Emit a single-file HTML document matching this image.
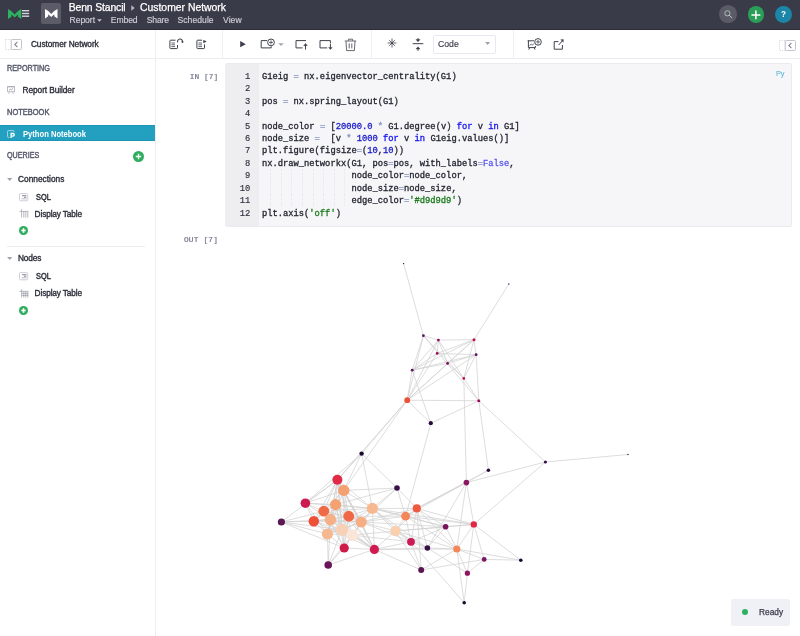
<!DOCTYPE html>
<html lang="en">
<head>
<meta charset="utf-8">
<title>Customer Network</title>
<style>
html,body{margin:0;padding:0;}
body{width:800px;height:636px;position:relative;overflow:hidden;background:#fff;will-change:transform;font-family:"Liberation Sans",sans-serif;}
.abs{position:absolute;}
.bm{display:inline-block;width:0;height:0;}
.t{position:absolute;white-space:pre;line-height:1;}
#topbar{left:0;top:0;width:800px;height:29px;background:#3a3b48;border-bottom:1px solid #2c2d38;}
#avatar{left:40.9px;top:3.3px;width:20.2px;height:20.5px;border-radius:2px;background:#5b5c68;}
.circ{border-radius:50%;}
#hline{left:0;top:58px;width:800px;height:1px;background:#ededf1;}
#vside{left:155px;top:30px;width:1px;height:606px;background:#eeeef2;}
.vd{top:30px;width:1px;height:28px;background:#efeff3;}
#sel{left:0;top:125.4px;width:155px;height:15.6px;background:#23a0c0;box-sizing:border-box;border-top:1px solid #1c94b4;border-bottom:1px solid #1c94b4;}
#sep{left:7px;top:246px;width:137.5px;height:1px;background:#ececf0;}
#cell{left:224.5px;top:63px;width:565.6px;height:161.5px;background:#f6f6f9;border:1px solid #e9ebf1;border-radius:2px;box-sizing:content-box;}
#gutter{left:225.3px;top:64px;width:33.5px;height:162.3px;background:#eeeef1;}
.ln,.cl{position:absolute;font:400 8.774px/1 "Liberation Mono",monospace;white-space:pre;color:#23242f;-webkit-text-stroke:0.3px;}
.ln{left:226.8px;width:23.4px;text-align:right;color:#30313d;-webkit-text-stroke:0.15px;}
.cl{left:262px;}
.ig{position:absolute;width:0;height:12.4px;border-left:1px dotted #e6e7ee;}
#select{left:432.9px;top:34.5px;width:61.6px;height:17.3px;border:1px solid #e6e8f2;border-radius:2px;background:#fff;}
#ready{left:731.2px;top:599px;width:59px;height:27px;border-radius:2.5px;background:#f0f1f6;}
svg{position:absolute;overflow:visible;}
svg.g{left:0;top:0;}
</style>
</head>
<body>
<div id="topbar" class="abs"></div>
<!-- logo -->
<svg style="left:7.7px;top:8.7px" width="13.3" height="10.1" viewBox="0 0 13.3 10.1" preserveAspectRatio="none">
  <path d="M0 0 L3.5 2.2 L6.65 5.4 L9.8 2.2 L13.3 0 L13.3 10.1 L9.9 7.7 L9.9 5.6 L6.65 8.6 L3.4 5.6 L3.4 7.7 L0 10.1 Z" fill="#2fb25f"/>
</svg>
<svg style="left:21.9px;top:10.2px" width="7.2" height="7" viewBox="0 0 7.2 7">
  <rect x="0" y="0" width="7.2" height="1.4" fill="#d4d5dc"/>
  <rect x="0" y="2.8" width="7.2" height="1.4" fill="#d4d5dc"/>
  <rect x="0" y="5.5" width="7.2" height="1.4" fill="#d4d5dc"/>
</svg>
<div id="avatar" class="abs"></div>
<svg style="left:44.8px;top:8.8px" width="12.5" height="9.5" viewBox="0 0 12.5 9.5" preserveAspectRatio="none">
  <path d="M0 0 L3.3 2.1 L6.25 5.1 L9.2 2.1 L12.5 0 L12.5 9.5 L9.3 7.2 L9.3 5.2 L6.25 8.1 L3.2 5.2 L3.2 7.2 L0 9.5 Z" fill="#ffffff"/>
</svg>
<!-- breadcrumb arrow + caret -->
<svg style="left:131px;top:5px" width="4" height="6" viewBox="0 0 4 6"><path d="M0.3 0.3 L3.7 3 L0.3 5.7 Z" fill="#b9bac4"/></svg>
<svg style="left:97.2px;top:19.2px" width="5" height="3" viewBox="0 0 5 3"><path d="M0.2 0.2 L4.8 0.2 L2.5 2.8 Z" fill="#c9cad2"/></svg>
<!-- top right circles -->
<div class="abs circ" style="left:719px;top:5.2px;width:17.6px;height:17.6px;background:#5a5b66"></div>
<svg style="left:722.5px;top:8.5px" width="11" height="11" viewBox="0 0 11 11"><circle cx="4.4" cy="4.3" r="2.6" fill="none" stroke="#b9c8c4" stroke-width="0.9"/><path d="M6.3 6.3 L8.8 8.8" stroke="#b9c8c4" stroke-width="1" stroke-linecap="round"/></svg>
<div class="abs circ" style="left:747.5px;top:6px;width:16.8px;height:16.8px;background:#2a9d58"></div>
<svg style="left:751px;top:9.5px" width="10" height="10" viewBox="0 0 10 10"><path d="M4.9 1 V8.8 M1 4.9 H8.8" stroke="#fff" stroke-width="1.5" stroke-linecap="round"/></svg>
<div class="abs circ" style="left:775px;top:6px;width:16.8px;height:16.8px;background:#1b86a8"></div>

<div id="hline" class="abs"></div>
<div id="vside" class="abs"></div>
<div class="abs vd" style="left:222px"></div>
<div class="abs vd" style="left:371px"></div>
<div class="abs vd" style="left:512.5px"></div>

<!-- sidebar collapse icon (left) -->
<svg style="left:4.5px;top:38.5px" width="17" height="11" viewBox="0 0 17 11">
  <rect x="0.5" y="0.5" width="5.6" height="10" fill="none" stroke="#c9cad2" stroke-width="0.7" stroke-dasharray="1.2 1"/>
  <rect x="6.3" y="0.5" width="10.2" height="10" rx="1" fill="#fff" stroke="#b4b5c2" stroke-width="0.8"/>
  <path d="M12.4 2.9 L9.8 5.5 L12.4 8.1" fill="none" stroke="#858694" stroke-width="1.1"/>
</svg>
<!-- right collapse icon -->
<svg style="left:779px;top:40px" width="17" height="11" viewBox="0 0 17 11">
  <rect x="0.5" y="0.5" width="5.6" height="10" fill="none" stroke="#c9cad2" stroke-width="0.7" stroke-dasharray="1.2 1"/>
  <rect x="6.3" y="0.5" width="10.2" height="10" rx="1" fill="#fff" stroke="#b4b5c2" stroke-width="0.8"/>
  <path d="M12.4 2.9 L9.8 5.5 L12.4 8.1" fill="none" stroke="#858694" stroke-width="1.1"/>
</svg>

<!-- toolbar icons -->

<svg style="left:168.5px;top:38.3px" width="16" height="12" viewBox="0 0 16 12" fill="none" stroke="#40414d" stroke-width="1">
  <path d="M6.5 2.2 H1.6 Q0.9 2.2 0.9 2.9 V9.9 Q0.9 10.6 1.6 10.6 H7.8 Q8.5 10.6 8.5 9.9 V7"/>
  <path d="M2.4 5 H6 M2.4 6.8 H6 M2.4 8.6 H6" stroke-width="0.8"/>
  <path d="M8.7 4.4 A2.5 2.5 0 1 1 13.5 3.9" stroke-width="1.1"/>
  <path d="M11.9 3.6 L13.5 5.2 L14.9 3.4 Z" fill="#40414d" stroke="none"/>
</svg>
<svg style="left:195.8px;top:38.3px" width="12" height="12" viewBox="0 0 12 12" fill="none" stroke="#40414d" stroke-width="1">
  <path d="M6 2.2 H1.6 Q0.9 2.2 0.9 2.9 V9.9 Q0.9 10.6 1.6 10.6 H7.8 Q8.5 10.6 8.5 9.9 V6.4"/>
  <path d="M2.4 5 H6 M2.4 6.8 H6 M2.4 8.6 H6" stroke-width="0.8"/>
  <path d="M7.3 1.7 L10.7 3.5 L7.3 5.3 Z" fill="#40414d" stroke="none"/>
</svg>
<svg style="left:240px;top:41px" width="6" height="6.4" viewBox="0 0 6 6.4"><path d="M0.2 0.1 L5.8 3.2 L0.2 6.3 Z" fill="#3d3e4a"/></svg>
<svg style="left:260px;top:38px" width="25" height="12" viewBox="0 0 25 12" fill="none" stroke="#40414d" stroke-width="1">
  <path d="M7 2.6 H1.2 V9.9 H11.2 V8.4"/>
  <circle cx="11" cy="4.4" r="3.4" fill="#fff"/>
  <path d="M11 2.4 V6.4 M9 4.4 H13" stroke-width="0.8"/>
  <path d="M18.2 5.2 L23.8 5.2 L21 7.9 Z" fill="#a5a6b0" stroke="none"/>
</svg>
<svg style="left:294.5px;top:39px" width="14" height="12" viewBox="0 0 14 12" fill="none" stroke="#40414d" stroke-width="1">
  <path d="M11 1.6 H1 V8.9 H7.6"/>
  <path d="M10.5 10.6 V6"/><path d="M8.6 6.7 L10.5 4.4 L12.4 6.7 Z" fill="#40414d" stroke-width="0.4"/>
</svg>
<svg style="left:319px;top:39px" width="14" height="12" viewBox="0 0 14 12" fill="none" stroke="#40414d" stroke-width="1">
  <path d="M11.4 4 V1.6 H1 V8.9 H8.2"/>
  <path d="M11.4 4.6 V9"/><path d="M9.6 8.4 L11.4 10.6 L13.2 8.4 Z" fill="#40414d" stroke-width="0.4"/>
</svg>
<svg style="left:343.8px;top:37.5px" width="13" height="14" viewBox="0 0 13 14" fill="none" stroke="#4c4d5a" stroke-width="0.85">
  <path d="M0.8 3 H12.2 M4.4 2.8 V1.2 H8.6 V2.8"/>
  <path d="M2 3.2 L2.6 12.6 H10.4 L11 3.2"/>
  <path d="M5.2 5.4 V10.4 M7.8 5.4 V10.4"/>
</svg>
<svg style="left:387.3px;top:38.4px" width="10" height="10" viewBox="0 0 10 10" fill="none" stroke="#40414d" stroke-width="0.8">
  <path d="M5 0.4 V9.6 M0.6 5 H9.4 M2.2 2.2 L7.8 7.8 M7.8 2.2 L2.2 7.8" />
</svg>
<svg style="left:411.5px;top:36.5px" width="12" height="15" viewBox="0 0 12 15" fill="none" stroke="#40414d" stroke-width="1">
  <path d="M0.7 6.7 H11.3"/>
  <path d="M6 1 V3.4 M6 13.9 V11.4"/>
  <path d="M4 2.6 L6 4.7 L8 2.6 Z M4 11.9 L6 9.8 L8 11.9 Z" fill="#40414d" stroke-width="0.5"/>
</svg>
<div id="select" class="abs"></div>
<svg style="left:484.9px;top:42.3px" width="5.2" height="3" viewBox="0 0 5.2 3"><path d="M0.1 0.1 L5.1 0.1 L2.6 2.9 Z" fill="#a0a1ad"/></svg>
<svg style="left:526.5px;top:38px" width="16" height="13" viewBox="0 0 16 13" fill="none" stroke="#40414d" stroke-width="1">
  <path d="M7 2.8 H1.4 V9.6 H8.4 V8"/>
  <path d="M0.6 2.8 H2 M2.6 9.6 L1.8 11.6 M7.2 9.6 L8 11.6" />
  <path d="M2.6 7.6 L4.2 6 L5.4 7.2 L7 5.4" stroke-width="0.8"/>
  <circle cx="11" cy="3.9" r="3.3" fill="#fff"/>
  <path d="M11 2 V5.8 M9.1 3.9 H12.9" stroke-width="0.8"/>
</svg>
<svg style="left:553px;top:38px" width="12" height="13" viewBox="0 0 12 13" fill="none" stroke="#40414d" stroke-width="1">
  <path d="M5.4 3.6 H1.2 V11.2 H9.4 V7"/>
  <path d="M5.6 7 L9.6 2.6"/>
  <path d="M7.4 1.6 L10.6 1.2 L10.4 4.4 Z" fill="#40414d" stroke="none"/>
</svg>

<!-- sidebar -->
<div id="sel" class="abs"></div>
<svg style="left:7.2px;top:85.8px" width="8" height="9" viewBox="0 0 8 9" fill="none" stroke="#8f909e" stroke-width="0.6">
  <rect x="0.7" y="0.8" width="6.6" height="5"/>
  <path d="M0 0.8 H8 M2.2 6 L1.8 7.8 M5.8 6 L6.2 7.8"/>
  <path d="M2 4.4 L3.3 3.2 L4.2 4 L6 2.4" stroke="#6d6e7c"/>
</svg>
<svg style="left:7.2px;top:129.8px" width="9" height="9" viewBox="0 0 9 9" fill="none" stroke="#c4e6f0" stroke-width="0.8">
  <path d="M2.4 7.4 H1.4 Q0.6 7.4 0.6 6.6 V1.4 Q0.6 0.6 1.4 0.6 H6.2 Q7 0.6 7 1.4 V2.2"/>
  <path d="M4.1 8 V3.5 H5.9 Q7.3 3.5 7.3 4.8 Q7.3 6.1 5.9 6.1 H4.1" stroke="#fff" stroke-width="1.3"/>
</svg>
<div class="abs circ" style="left:132.8px;top:151px;width:11.2px;height:11.2px;background:#2eae5e"></div>
<svg style="left:134.9px;top:153.1px" width="7" height="7" viewBox="0 0 7 7"><path d="M3.5 0.8 V6.2 M0.8 3.5 H6.2" stroke="#fff" stroke-width="1.3"/></svg>

<svg style="left:7.2px;top:177.6px" width="5.4" height="3" viewBox="0 0 5.4 3"><path d="M0.1 0.1 L5.3 0.1 L2.7 2.9 Z" fill="#a2a3af"/></svg>
<svg style="left:7.2px;top:257px" width="5.4" height="3" viewBox="0 0 5.4 3"><path d="M0.1 0.1 L5.3 0.1 L2.7 2.9 Z" fill="#a2a3af"/></svg>

<svg style="left:18.8px;top:192.8px" width="10" height="9" viewBox="0 0 10 9" fill="none" stroke="#8a8b98" stroke-width="0.7">
  <rect x="0.5" y="0.6" width="8.2" height="7.2" rx="1" stroke="#b9bac8"/>
  <path d="M3 2.7 H7.4 M5 4.2 H7.4" stroke="#55566a"/><path d="M2.6 5.8 H7.6" stroke="#9a9ba8"/>
</svg>
<svg style="left:18.8px;top:272.2px" width="10" height="9" viewBox="0 0 10 9" fill="none" stroke="#8a8b98" stroke-width="0.7">
  <rect x="0.5" y="0.6" width="8.2" height="7.2" rx="1" stroke="#b9bac8"/>
  <path d="M3 2.7 H7.4 M5 4.2 H7.4" stroke="#55566a"/><path d="M2.6 5.8 H7.6" stroke="#9a9ba8"/>
</svg>
<svg style="left:18.8px;top:209.2px" width="10" height="9" viewBox="0 0 10 9" fill="none" stroke="#8a8b98" stroke-width="0.6">
  <path d="M0.4 2.4 H9.4 M2.6 0.2 V8.6 M4.8 2.4 V8.6 M6.8 2.4 V8.6 M8.8 2.4 V8.6"/>
</svg>
<svg style="left:18.8px;top:288.8px" width="10" height="9" viewBox="0 0 10 9" fill="none" stroke="#8a8b98" stroke-width="0.6">
  <path d="M0.4 2.4 H9.4 M2.6 0.2 V8.6 M2.6 4.4 H9.4 M2.6 6.4 H9.4 M4.8 2.4 V8.6 M6.8 2.4 V8.6 M8.8 2.4 V8.6"/>
</svg>
<div class="abs circ" style="left:19px;top:226.4px;width:8.8px;height:8.8px;background:#2eae5e"></div>
<svg style="left:20.9px;top:228.3px" width="5" height="5" viewBox="0 0 5 5"><path d="M2.5 0.3 V4.7 M0.3 2.5 H4.7" stroke="#fff" stroke-width="1.6"/></svg>
<div class="abs circ" style="left:19px;top:305.8px;width:8.8px;height:8.8px;background:#2eae5e"></div>
<svg style="left:20.9px;top:307.7px" width="5" height="5" viewBox="0 0 5 5"><path d="M2.5 0.3 V4.7 M0.3 2.5 H4.7" stroke="#fff" stroke-width="1.6"/></svg>
<div id="sep" class="abs"></div>

<!-- code cell -->
<div id="cell" class="abs"></div>
<div id="gutter" class="abs"></div>
<div class="ig" style="left:270.43px;top:168.84px"></div><div class="ig" style="left:280.96px;top:168.84px"></div><div class="ig" style="left:291.49px;top:168.84px"></div><div class="ig" style="left:302.02px;top:168.84px"></div><div class="ig" style="left:312.55px;top:168.84px"></div><div class="ig" style="left:323.08px;top:168.84px"></div><div class="ig" style="left:333.61px;top:168.84px"></div><div class="ig" style="left:344.14px;top:168.84px"></div><div class="ig" style="left:270.43px;top:181.27px"></div><div class="ig" style="left:280.96px;top:181.27px"></div><div class="ig" style="left:291.49px;top:181.27px"></div><div class="ig" style="left:302.02px;top:181.27px"></div><div class="ig" style="left:312.55px;top:181.27px"></div><div class="ig" style="left:323.08px;top:181.27px"></div><div class="ig" style="left:333.61px;top:181.27px"></div><div class="ig" style="left:344.14px;top:181.27px"></div><div class="ig" style="left:270.43px;top:193.70px"></div><div class="ig" style="left:280.96px;top:193.70px"></div><div class="ig" style="left:291.49px;top:193.70px"></div><div class="ig" style="left:302.02px;top:193.70px"></div><div class="ig" style="left:312.55px;top:193.70px"></div><div class="ig" style="left:323.08px;top:193.70px"></div><div class="ig" style="left:333.61px;top:193.70px"></div><div class="ig" style="left:344.14px;top:193.70px"></div>
<div class="ln" style="top:73.00px">1</div><div class="cl" style="top:73.00px">G1eig <span style="color:#8794c0">=</span> nx.eigenvector_centrality(G1)</div><div class="ln" style="top:85.00px">2</div><div class="ln" style="top:98.00px">3</div><div class="cl" style="top:98.00px">pos <span style="color:#8794c0">=</span> nx.spring_layout(G1)</div><div class="ln" style="top:110.00px">4</div><div class="ln" style="top:123.00px">5</div><div class="cl" style="top:123.00px">node_color <span style="color:#8794c0">=</span> [<span style="color:#1a1ac8">20000.0</span> <span style="color:#8794c0">*</span> G1.degree(v) <span style="color:#1414f0">for</span> v <span style="color:#1414f0">in</span> G1]</div><div class="ln" style="top:135.00px">6</div><div class="cl" style="top:135.00px">node_size <span style="color:#8794c0">=</span>  [v <span style="color:#8794c0">*</span> <span style="color:#1a1ac8">1000</span> <span style="color:#1414f0">for</span> v <span style="color:#1414f0">in</span> G1eig.values()]</div><div class="ln" style="top:147.00px">7</div><div class="cl" style="top:147.00px">plt.figure(figsize<span style="color:#8794c0">=</span>(<span style="color:#1a1ac8">10</span>,<span style="color:#1a1ac8">10</span>))</div><div class="ln" style="top:160.00px">8</div><div class="cl" style="top:160.00px">nx.draw_networkx(G1, pos<span style="color:#8794c0">=</span>pos, with_labels<span style="color:#8794c0">=</span><span style="color:#5a5af0">False</span>,</div><div class="ln" style="top:172.00px">9</div><div class="cl" style="top:172.00px">                 node_color<span style="color:#8794c0">=</span>node_color,</div><div class="ln" style="top:185.00px">10</div><div class="cl" style="top:185.00px">                 node_size<span style="color:#8794c0">=</span>node_size,</div><div class="ln" style="top:197.00px">11</div><div class="cl" style="top:197.00px">                 edge_color<span style="color:#8794c0">=</span><span style="color:#1a7a1a">'#d9d9d9'</span>)</div><div class="ln" style="top:210.00px">12</div><div class="cl" style="top:210.00px">plt.axis(<span style="color:#1a7a1a">'off'</span>)</div>

<!-- ready -->
<div id="ready" class="abs"></div>
<div class="abs circ" style="left:741.8px;top:609.1px;width:6px;height:6px;background:#2eb060"></div>

<svg class="g" width="800" height="636" viewBox="0 0 800 636">
<g stroke="#d2d2d2" stroke-width="0.75" fill="none">
<line x1="423.4" y1="335.7" x2="438.4" y2="340.1"/>
<line x1="423.4" y1="335.7" x2="412.2" y2="370.2"/>
<line x1="423.4" y1="335.7" x2="463.8" y2="378.4"/>
<line x1="423.4" y1="335.7" x2="407.2" y2="400.2"/>
<line x1="423.4" y1="335.7" x2="478.8" y2="400.8"/>
<line x1="423.4" y1="335.7" x2="403.6" y2="263.6"/>
<line x1="438.4" y1="340.1" x2="474.0" y2="339.7"/>
<line x1="438.4" y1="340.1" x2="437.2" y2="353.4"/>
<line x1="438.4" y1="340.1" x2="447.6" y2="363.4"/>
<line x1="438.4" y1="340.1" x2="412.2" y2="370.2"/>
<line x1="438.4" y1="340.1" x2="463.8" y2="378.4"/>
<line x1="438.4" y1="340.1" x2="407.2" y2="400.2"/>
<line x1="474.0" y1="339.7" x2="437.2" y2="353.4"/>
<line x1="474.0" y1="339.7" x2="476.1" y2="354.7"/>
<line x1="474.0" y1="339.7" x2="447.6" y2="363.4"/>
<line x1="474.0" y1="339.7" x2="412.2" y2="370.2"/>
<line x1="474.0" y1="339.7" x2="463.8" y2="378.4"/>
<line x1="474.0" y1="339.7" x2="407.2" y2="400.2"/>
<line x1="474.0" y1="339.7" x2="508.8" y2="284.0"/>
<line x1="437.2" y1="353.4" x2="476.1" y2="354.7"/>
<line x1="437.2" y1="353.4" x2="412.2" y2="370.2"/>
<line x1="437.2" y1="353.4" x2="407.2" y2="400.2"/>
<line x1="476.1" y1="354.7" x2="447.6" y2="363.4"/>
<line x1="476.1" y1="354.7" x2="412.2" y2="370.2"/>
<line x1="476.1" y1="354.7" x2="463.8" y2="378.4"/>
<line x1="476.1" y1="354.7" x2="407.2" y2="400.2"/>
<line x1="476.1" y1="354.7" x2="478.8" y2="400.8"/>
<line x1="447.6" y1="363.4" x2="412.2" y2="370.2"/>
<line x1="447.6" y1="363.4" x2="463.8" y2="378.4"/>
<line x1="447.6" y1="363.4" x2="407.2" y2="400.2"/>
<line x1="412.2" y1="370.2" x2="407.2" y2="400.2"/>
<line x1="412.2" y1="370.2" x2="430.8" y2="423.2"/>
<line x1="463.8" y1="378.4" x2="478.8" y2="400.8"/>
<line x1="463.8" y1="378.4" x2="466.4" y2="482.6"/>
<line x1="407.2" y1="400.2" x2="478.8" y2="400.8"/>
<line x1="407.2" y1="400.2" x2="430.8" y2="423.2"/>
<line x1="407.2" y1="400.2" x2="361.6" y2="453.6"/>
<line x1="407.2" y1="400.2" x2="337.4" y2="479.8"/>
<line x1="407.2" y1="400.2" x2="343.8" y2="490.4"/>
<line x1="478.8" y1="400.8" x2="430.8" y2="423.2"/>
<line x1="478.8" y1="400.8" x2="545.4" y2="462.0"/>
<line x1="478.8" y1="400.8" x2="488.4" y2="470.2"/>
<line x1="430.8" y1="423.2" x2="405.6" y2="516.2"/>
<line x1="361.6" y1="453.6" x2="337.4" y2="479.8"/>
<line x1="361.6" y1="453.6" x2="343.8" y2="490.4"/>
<line x1="361.6" y1="453.6" x2="397.0" y2="488.0"/>
<line x1="361.6" y1="453.6" x2="305.4" y2="503.2"/>
<line x1="361.6" y1="453.6" x2="372.4" y2="508.4"/>
<line x1="348.8" y1="516.2" x2="405.6" y2="516.2"/>
<line x1="348.8" y1="516.2" x2="330.4" y2="519.6"/>
<line x1="348.8" y1="516.2" x2="313.8" y2="521.2"/>
<line x1="348.8" y1="516.2" x2="361.2" y2="522.0"/>
<line x1="348.8" y1="516.2" x2="327.4" y2="534.0"/>
<line x1="348.8" y1="516.2" x2="337.4" y2="479.8"/>
<line x1="348.8" y1="516.2" x2="344.2" y2="548.0"/>
<line x1="348.8" y1="516.2" x2="374.4" y2="549.4"/>
<line x1="348.8" y1="516.2" x2="343.8" y2="490.4"/>
<line x1="348.8" y1="516.2" x2="323.8" y2="511.2"/>
<line x1="348.8" y1="516.2" x2="372.4" y2="508.4"/>
<line x1="405.6" y1="516.2" x2="361.2" y2="522.0"/>
<line x1="405.6" y1="516.2" x2="395.4" y2="531.0"/>
<line x1="405.6" y1="516.2" x2="411.0" y2="541.8"/>
<line x1="405.6" y1="516.2" x2="397.0" y2="488.0"/>
<line x1="405.6" y1="516.2" x2="372.4" y2="508.4"/>
<line x1="405.6" y1="516.2" x2="416.8" y2="508.4"/>
<line x1="405.6" y1="516.2" x2="466.4" y2="482.6"/>
<line x1="405.6" y1="516.2" x2="473.8" y2="524.4"/>
<line x1="405.6" y1="516.2" x2="445.6" y2="526.8"/>
<line x1="405.6" y1="516.2" x2="456.8" y2="549.0"/>
<line x1="330.4" y1="519.6" x2="313.8" y2="521.2"/>
<line x1="330.4" y1="519.6" x2="281.4" y2="522.0"/>
<line x1="330.4" y1="519.6" x2="361.2" y2="522.0"/>
<line x1="330.4" y1="519.6" x2="342.0" y2="529.8"/>
<line x1="330.4" y1="519.6" x2="337.4" y2="479.8"/>
<line x1="330.4" y1="519.6" x2="344.2" y2="548.0"/>
<line x1="330.4" y1="519.6" x2="374.4" y2="549.4"/>
<line x1="330.4" y1="519.6" x2="328.2" y2="565.0"/>
<line x1="330.4" y1="519.6" x2="305.4" y2="503.2"/>
<line x1="330.4" y1="519.6" x2="335.6" y2="504.6"/>
<line x1="330.4" y1="519.6" x2="323.8" y2="511.2"/>
<line x1="313.8" y1="521.2" x2="281.4" y2="522.0"/>
<line x1="313.8" y1="521.2" x2="361.2" y2="522.0"/>
<line x1="313.8" y1="521.2" x2="342.0" y2="529.8"/>
<line x1="313.8" y1="521.2" x2="327.4" y2="534.0"/>
<line x1="313.8" y1="521.2" x2="337.4" y2="479.8"/>
<line x1="313.8" y1="521.2" x2="374.4" y2="549.4"/>
<line x1="313.8" y1="521.2" x2="343.8" y2="490.4"/>
<line x1="313.8" y1="521.2" x2="305.4" y2="503.2"/>
<line x1="313.8" y1="521.2" x2="335.6" y2="504.6"/>
<line x1="313.8" y1="521.2" x2="323.8" y2="511.2"/>
<line x1="281.4" y1="522.0" x2="342.0" y2="529.8"/>
<line x1="281.4" y1="522.0" x2="327.4" y2="534.0"/>
<line x1="281.4" y1="522.0" x2="337.4" y2="479.8"/>
<line x1="281.4" y1="522.0" x2="344.2" y2="548.0"/>
<line x1="281.4" y1="522.0" x2="323.8" y2="511.2"/>
<line x1="361.2" y1="522.0" x2="342.0" y2="529.8"/>
<line x1="361.2" y1="522.0" x2="395.4" y2="531.0"/>
<line x1="361.2" y1="522.0" x2="327.4" y2="534.0"/>
<line x1="361.2" y1="522.0" x2="352.2" y2="535.2"/>
<line x1="361.2" y1="522.0" x2="337.4" y2="479.8"/>
<line x1="361.2" y1="522.0" x2="411.0" y2="541.8"/>
<line x1="361.2" y1="522.0" x2="344.2" y2="548.0"/>
<line x1="361.2" y1="522.0" x2="374.4" y2="549.4"/>
<line x1="361.2" y1="522.0" x2="343.8" y2="490.4"/>
<line x1="361.2" y1="522.0" x2="397.0" y2="488.0"/>
<line x1="361.2" y1="522.0" x2="335.6" y2="504.6"/>
<line x1="361.2" y1="522.0" x2="323.8" y2="511.2"/>
<line x1="361.2" y1="522.0" x2="372.4" y2="508.4"/>
<line x1="361.2" y1="522.0" x2="416.8" y2="508.4"/>
<line x1="361.2" y1="522.0" x2="445.6" y2="526.8"/>
<line x1="342.0" y1="529.8" x2="327.4" y2="534.0"/>
<line x1="342.0" y1="529.8" x2="352.2" y2="535.2"/>
<line x1="342.0" y1="529.8" x2="337.4" y2="479.8"/>
<line x1="342.0" y1="529.8" x2="374.4" y2="549.4"/>
<line x1="342.0" y1="529.8" x2="328.2" y2="565.0"/>
<line x1="342.0" y1="529.8" x2="335.6" y2="504.6"/>
<line x1="342.0" y1="529.8" x2="323.8" y2="511.2"/>
<line x1="395.4" y1="531.0" x2="352.2" y2="535.2"/>
<line x1="395.4" y1="531.0" x2="411.0" y2="541.8"/>
<line x1="395.4" y1="531.0" x2="374.4" y2="549.4"/>
<line x1="395.4" y1="531.0" x2="372.4" y2="508.4"/>
<line x1="395.4" y1="531.0" x2="416.8" y2="508.4"/>
<line x1="395.4" y1="531.0" x2="421.2" y2="570.0"/>
<line x1="395.4" y1="531.0" x2="473.8" y2="524.4"/>
<line x1="395.4" y1="531.0" x2="445.6" y2="526.8"/>
<line x1="395.4" y1="531.0" x2="427.4" y2="548.0"/>
<line x1="395.4" y1="531.0" x2="456.8" y2="549.0"/>
<line x1="327.4" y1="534.0" x2="352.2" y2="535.2"/>
<line x1="327.4" y1="534.0" x2="337.4" y2="479.8"/>
<line x1="327.4" y1="534.0" x2="344.2" y2="548.0"/>
<line x1="327.4" y1="534.0" x2="328.2" y2="565.0"/>
<line x1="327.4" y1="534.0" x2="343.8" y2="490.4"/>
<line x1="327.4" y1="534.0" x2="305.4" y2="503.2"/>
<line x1="327.4" y1="534.0" x2="335.6" y2="504.6"/>
<line x1="327.4" y1="534.0" x2="372.4" y2="508.4"/>
<line x1="352.2" y1="535.2" x2="337.4" y2="479.8"/>
<line x1="352.2" y1="535.2" x2="411.0" y2="541.8"/>
<line x1="352.2" y1="535.2" x2="344.2" y2="548.0"/>
<line x1="352.2" y1="535.2" x2="374.4" y2="549.4"/>
<line x1="352.2" y1="535.2" x2="328.2" y2="565.0"/>
<line x1="352.2" y1="535.2" x2="335.6" y2="504.6"/>
<line x1="352.2" y1="535.2" x2="323.8" y2="511.2"/>
<line x1="352.2" y1="535.2" x2="372.4" y2="508.4"/>
<line x1="337.4" y1="479.8" x2="344.2" y2="548.0"/>
<line x1="337.4" y1="479.8" x2="374.4" y2="549.4"/>
<line x1="337.4" y1="479.8" x2="343.8" y2="490.4"/>
<line x1="337.4" y1="479.8" x2="305.4" y2="503.2"/>
<line x1="337.4" y1="479.8" x2="335.6" y2="504.6"/>
<line x1="337.4" y1="479.8" x2="323.8" y2="511.2"/>
<line x1="337.4" y1="479.8" x2="372.4" y2="508.4"/>
<line x1="411.0" y1="541.8" x2="374.4" y2="549.4"/>
<line x1="411.0" y1="541.8" x2="372.4" y2="508.4"/>
<line x1="411.0" y1="541.8" x2="416.8" y2="508.4"/>
<line x1="411.0" y1="541.8" x2="421.2" y2="570.0"/>
<line x1="411.0" y1="541.8" x2="464.2" y2="602.8"/>
<line x1="411.0" y1="541.8" x2="445.6" y2="526.8"/>
<line x1="411.0" y1="541.8" x2="427.4" y2="548.0"/>
<line x1="344.2" y1="548.0" x2="374.4" y2="549.4"/>
<line x1="344.2" y1="548.0" x2="328.2" y2="565.0"/>
<line x1="344.2" y1="548.0" x2="343.8" y2="490.4"/>
<line x1="344.2" y1="548.0" x2="335.6" y2="504.6"/>
<line x1="344.2" y1="548.0" x2="323.8" y2="511.2"/>
<line x1="374.4" y1="549.4" x2="328.2" y2="565.0"/>
<line x1="374.4" y1="549.4" x2="343.8" y2="490.4"/>
<line x1="374.4" y1="549.4" x2="335.6" y2="504.6"/>
<line x1="374.4" y1="549.4" x2="323.8" y2="511.2"/>
<line x1="374.4" y1="549.4" x2="372.4" y2="508.4"/>
<line x1="374.4" y1="549.4" x2="421.2" y2="570.0"/>
<line x1="374.4" y1="549.4" x2="427.4" y2="548.0"/>
<line x1="374.4" y1="549.4" x2="456.8" y2="549.0"/>
<line x1="343.8" y1="490.4" x2="397.0" y2="488.0"/>
<line x1="343.8" y1="490.4" x2="305.4" y2="503.2"/>
<line x1="343.8" y1="490.4" x2="323.8" y2="511.2"/>
<line x1="343.8" y1="490.4" x2="372.4" y2="508.4"/>
<line x1="397.0" y1="488.0" x2="335.6" y2="504.6"/>
<line x1="397.0" y1="488.0" x2="372.4" y2="508.4"/>
<line x1="397.0" y1="488.0" x2="416.8" y2="508.4"/>
<line x1="305.4" y1="503.2" x2="335.6" y2="504.6"/>
<line x1="305.4" y1="503.2" x2="323.8" y2="511.2"/>
<line x1="305.4" y1="503.2" x2="372.4" y2="508.4"/>
<line x1="335.6" y1="504.6" x2="323.8" y2="511.2"/>
<line x1="335.6" y1="504.6" x2="372.4" y2="508.4"/>
<line x1="323.8" y1="511.2" x2="372.4" y2="508.4"/>
<line x1="372.4" y1="508.4" x2="416.8" y2="508.4"/>
<line x1="372.4" y1="508.4" x2="473.8" y2="524.4"/>
<line x1="372.4" y1="508.4" x2="445.6" y2="526.8"/>
<line x1="372.4" y1="508.4" x2="427.4" y2="548.0"/>
<line x1="416.8" y1="508.4" x2="421.2" y2="570.0"/>
<line x1="416.8" y1="508.4" x2="488.4" y2="470.2"/>
<line x1="416.8" y1="508.4" x2="466.4" y2="482.6"/>
<line x1="416.8" y1="508.4" x2="473.8" y2="524.4"/>
<line x1="416.8" y1="508.4" x2="445.6" y2="526.8"/>
<line x1="416.8" y1="508.4" x2="427.4" y2="548.0"/>
<line x1="416.8" y1="508.4" x2="456.8" y2="549.0"/>
<line x1="545.4" y1="462.0" x2="628.0" y2="454.5"/>
<line x1="545.4" y1="462.0" x2="466.4" y2="482.6"/>
<line x1="545.4" y1="462.0" x2="473.8" y2="524.4"/>
<line x1="421.2" y1="570.0" x2="456.8" y2="549.0"/>
<line x1="421.2" y1="570.0" x2="484.2" y2="559.4"/>
<line x1="467.4" y1="573.2" x2="464.2" y2="602.8"/>
<line x1="467.4" y1="573.2" x2="473.8" y2="524.4"/>
<line x1="467.4" y1="573.2" x2="427.4" y2="548.0"/>
<line x1="467.4" y1="573.2" x2="456.8" y2="549.0"/>
<line x1="467.4" y1="573.2" x2="484.2" y2="559.4"/>
<line x1="464.2" y1="602.8" x2="456.8" y2="549.0"/>
<line x1="488.4" y1="470.2" x2="466.4" y2="482.6"/>
<line x1="466.4" y1="482.6" x2="473.8" y2="524.4"/>
<line x1="466.4" y1="482.6" x2="427.4" y2="548.0"/>
<line x1="466.4" y1="482.6" x2="456.8" y2="549.0"/>
<line x1="473.8" y1="524.4" x2="445.6" y2="526.8"/>
<line x1="473.8" y1="524.4" x2="456.8" y2="549.0"/>
<line x1="473.8" y1="524.4" x2="484.2" y2="559.4"/>
<line x1="473.8" y1="524.4" x2="520.8" y2="560.2"/>
<line x1="445.6" y1="526.8" x2="427.4" y2="548.0"/>
<line x1="445.6" y1="526.8" x2="456.8" y2="549.0"/>
<line x1="427.4" y1="548.0" x2="456.8" y2="549.0"/>
<line x1="456.8" y1="549.0" x2="484.2" y2="559.4"/>
<line x1="456.8" y1="549.0" x2="520.8" y2="560.2"/>
<line x1="484.2" y1="559.4" x2="520.8" y2="560.2"/>
</g>
<circle cx="403.6" cy="263.6" r="0.7" fill="#2a0a38"/>
<circle cx="508.8" cy="284.0" r="0.8" fill="#5a1a6a"/>
<circle cx="423.4" cy="335.7" r="1.4" fill="#5a1060"/>
<circle cx="438.4" cy="340.1" r="1.4" fill="#8b0a55"/>
<circle cx="474.0" cy="339.7" r="1.5" fill="#c0114e"/>
<circle cx="437.2" cy="353.4" r="1.4" fill="#9b0b5a"/>
<circle cx="476.1" cy="354.7" r="1.4" fill="#5a1060"/>
<circle cx="447.6" cy="363.4" r="1.4" fill="#7a0a60"/>
<circle cx="412.2" cy="370.2" r="1.4" fill="#5a1060"/>
<circle cx="463.8" cy="378.4" r="1.4" fill="#c0114e"/>
<circle cx="407.2" cy="400.2" r="2.9" fill="#ee5038"/>
<circle cx="478.8" cy="400.8" r="1.5" fill="#a00a58"/>
<circle cx="430.8" cy="423.2" r="2.1" fill="#2a0a38"/>
<circle cx="361.6" cy="453.6" r="2.2" fill="#1a0a30"/>
<circle cx="337.4" cy="479.8" r="5.0" fill="#e02a48"/>
<circle cx="343.8" cy="490.4" r="5.6" fill="#f5a070"/>
<circle cx="397.0" cy="488.0" r="2.8" fill="#3a1048"/>
<circle cx="305.4" cy="503.2" r="4.8" fill="#cc1a50"/>
<circle cx="335.6" cy="504.6" r="5.6" fill="#f4a272"/>
<circle cx="323.8" cy="511.2" r="5.4" fill="#f06a45"/>
<circle cx="372.4" cy="508.4" r="5.6" fill="#f7b890"/>
<circle cx="416.8" cy="508.4" r="4.1" fill="#ee5a40"/>
<circle cx="348.8" cy="516.2" r="5.4" fill="#f06845"/>
<circle cx="405.6" cy="516.2" r="4.4" fill="#f4875a"/>
<circle cx="330.4" cy="519.6" r="5.8" fill="#f6b088"/>
<circle cx="313.8" cy="521.2" r="5.2" fill="#ee5038"/>
<circle cx="281.4" cy="522.0" r="3.6" fill="#5a1855"/>
<circle cx="361.2" cy="522.0" r="5.6" fill="#f6ae85"/>
<circle cx="342.0" cy="529.8" r="6.0" fill="#f8d0b5"/>
<circle cx="395.4" cy="531.0" r="5.2" fill="#f8d0b0"/>
<circle cx="327.4" cy="534.0" r="5.6" fill="#f6b890"/>
<circle cx="352.2" cy="535.2" r="6.0" fill="#fae6d8"/>
<circle cx="411.0" cy="541.8" r="3.9" fill="#cc1a55"/>
<circle cx="344.2" cy="548.0" r="4.6" fill="#d01a4a"/>
<circle cx="374.4" cy="549.4" r="4.6" fill="#d01a50"/>
<circle cx="328.2" cy="565.0" r="3.8" fill="#6a1558"/>
<circle cx="545.4" cy="462.0" r="1.6" fill="#3a1050"/>
<circle cx="488.4" cy="470.2" r="1.8" fill="#2a0a38"/>
<circle cx="466.4" cy="482.6" r="2.8" fill="#8b1560"/>
<circle cx="473.8" cy="524.4" r="3.2" fill="#e02845"/>
<circle cx="445.6" cy="526.8" r="2.8" fill="#7a1560"/>
<circle cx="427.4" cy="548.0" r="2.8" fill="#3a1048"/>
<circle cx="456.8" cy="549.0" r="3.6" fill="#f4875a"/>
<circle cx="484.2" cy="559.4" r="2.4" fill="#7a1560"/>
<circle cx="520.8" cy="560.2" r="1.8" fill="#1a0a30"/>
<circle cx="421.2" cy="570.0" r="3.0" fill="#5a1550"/>
<circle cx="467.4" cy="573.2" r="2.6" fill="#8b1560"/>
<circle cx="464.2" cy="602.8" r="1.8" fill="#1a0a30"/>
<circle cx="628.0" cy="454.5" r="0.7" fill="#2a0a38"/>
</svg>
<span class="t" id="t0" style="left:68.80px;top:3.00px;font:400 10.40px/1 'Liberation Sans', sans-serif;color:#ffffff;letter-spacing:-0.137px;-webkit-text-stroke:0.25px #fff;">Benn Stancil</span>
<span class="t" id="t1" style="left:140.00px;top:3.00px;font:400 10.40px/1 'Liberation Sans', sans-serif;color:#ffffff;letter-spacing:-0.003px;-webkit-text-stroke:0.25px #fff;">Customer Network</span>
<span class="t" id="t2" style="left:69.50px;top:16.00px;font:400 8.60px/1 'Liberation Sans', sans-serif;color:#cfd0d8;letter-spacing:-0.049px;-webkit-text-stroke:0.15px;">Report</span>
<span class="t" id="t3" style="left:110.80px;top:16.00px;font:400 8.60px/1 'Liberation Sans', sans-serif;color:#cfd0d8;letter-spacing:-0.107px;-webkit-text-stroke:0.15px;">Embed</span>
<span class="t" id="t4" style="left:146.80px;top:16.00px;font:400 8.60px/1 'Liberation Sans', sans-serif;color:#cfd0d8;letter-spacing:-0.188px;-webkit-text-stroke:0.15px;">Share</span>
<span class="t" id="t5" style="left:177.50px;top:16.00px;font:400 8.60px/1 'Liberation Sans', sans-serif;color:#cfd0d8;letter-spacing:0.045px;-webkit-text-stroke:0.15px;">Schedule</span>
<span class="t" id="t6" style="left:223.00px;top:16.00px;font:400 8.60px/1 'Liberation Sans', sans-serif;color:#cfd0d8;letter-spacing:0.054px;-webkit-text-stroke:0.15px;">View</span>
<span class="t" id="t7" style="left:781.10px;top:11.00px;font:700 8.20px/1 'Liberation Sans', sans-serif;color:#ffffff;">?</span>
<span class="t" id="t8" style="left:30.90px;top:40.00px;font:400 8.30px/1 'Liberation Sans', sans-serif;color:#2d2e3a;letter-spacing:-0.056px;-webkit-text-stroke:0.35px #2d2e3a;">Customer Network</span>
<span class="t" id="t9" style="left:7.00px;top:65.00px;font:400 8.20px/1 'Liberation Sans', sans-serif;color:#55566a;transform:scaleX(0.8860);transform-origin:0 0;-webkit-text-stroke:0.4px;">REPORTING</span>
<span class="t" id="t10" style="left:22.60px;top:86.00px;font:400 8.30px/1 'Liberation Sans', sans-serif;color:#2d2e3a;letter-spacing:-0.075px;-webkit-text-stroke:0.35px #2d2e3a;">Report Builder</span>
<span class="t" id="t11" style="left:7.00px;top:109.00px;font:400 8.20px/1 'Liberation Sans', sans-serif;color:#55566a;transform:scaleX(0.9137);transform-origin:0 0;-webkit-text-stroke:0.4px;">NOTEBOOK</span>
<span class="t" id="t12" style="left:22.60px;top:130.00px;font:700 8.30px/1 'Liberation Sans', sans-serif;color:#ffffff;transform:scaleX(0.9172);transform-origin:0 0;">Python Notebook</span>
<span class="t" id="t13" style="left:7.00px;top:152.00px;font:400 8.20px/1 'Liberation Sans', sans-serif;color:#55566a;transform:scaleX(0.8790);transform-origin:0 0;-webkit-text-stroke:0.4px;">QUERIES</span>
<span class="t" id="t14" style="left:18.00px;top:175.00px;font:400 8.30px/1 'Liberation Sans', sans-serif;color:#2d2e3a;letter-spacing:0.025px;-webkit-text-stroke:0.35px #2d2e3a;">Connections</span>
<span class="t" id="t15" style="left:36.40px;top:193.00px;font:400 8.30px/1 'Liberation Sans', sans-serif;color:#2d2e3a;transform:scaleX(0.8911);transform-origin:0 0;-webkit-text-stroke:0.45px #2d2e3a;">SQL</span>
<span class="t" id="t16" style="left:34.60px;top:210.00px;font:400 8.30px/1 'Liberation Sans', sans-serif;color:#2d2e3a;letter-spacing:-0.139px;-webkit-text-stroke:0.35px #2d2e3a;">Display Table</span>
<span class="t" id="t17" style="left:18.00px;top:254.00px;font:400 8.30px/1 'Liberation Sans', sans-serif;color:#2d2e3a;letter-spacing:-0.157px;-webkit-text-stroke:0.35px #2d2e3a;">Nodes</span>
<span class="t" id="t18" style="left:36.40px;top:272.00px;font:400 8.30px/1 'Liberation Sans', sans-serif;color:#2d2e3a;transform:scaleX(0.8911);transform-origin:0 0;-webkit-text-stroke:0.45px #2d2e3a;">SQL</span>
<span class="t" id="t19" style="left:34.60px;top:289.00px;font:400 8.30px/1 'Liberation Sans', sans-serif;color:#2d2e3a;letter-spacing:-0.139px;-webkit-text-stroke:0.35px #2d2e3a;">Display Table</span>
<span class="t" id="t20" style="left:437.90px;top:40.00px;font:400 8.70px/1 'Liberation Sans', sans-serif;color:#3a3b48;letter-spacing:0.030px;-webkit-text-stroke:0.15px;">Code</span>
<span class="t" id="t21" style="left:776.00px;top:70.00px;font:400 7.40px/1 'Liberation Sans', sans-serif;color:#4aaed0;letter-spacing:-0.112px;">Py</span>
<span class="t" id="t22" style="left:759.00px;top:608.00px;font:400 8.30px/1 'Liberation Sans', sans-serif;color:#3a3b48;letter-spacing:0.023px;-webkit-text-stroke:0.25px #3a3b48;">Ready</span>
<span class="t" id="t23" style="left:189.70px;top:74.00px;font:400 7.80px/1 'Liberation Mono', monospace;color:#74758a;letter-spacing:0.087px;-webkit-text-stroke:0.2px;">IN [7]</span>
<span class="t" id="t24" style="left:184.00px;top:237.00px;font:400 7.80px/1 'Liberation Mono', monospace;color:#74758a;letter-spacing:0.176px;-webkit-text-stroke:0.2px;">OUT [7]</span>

</body>
</html>
